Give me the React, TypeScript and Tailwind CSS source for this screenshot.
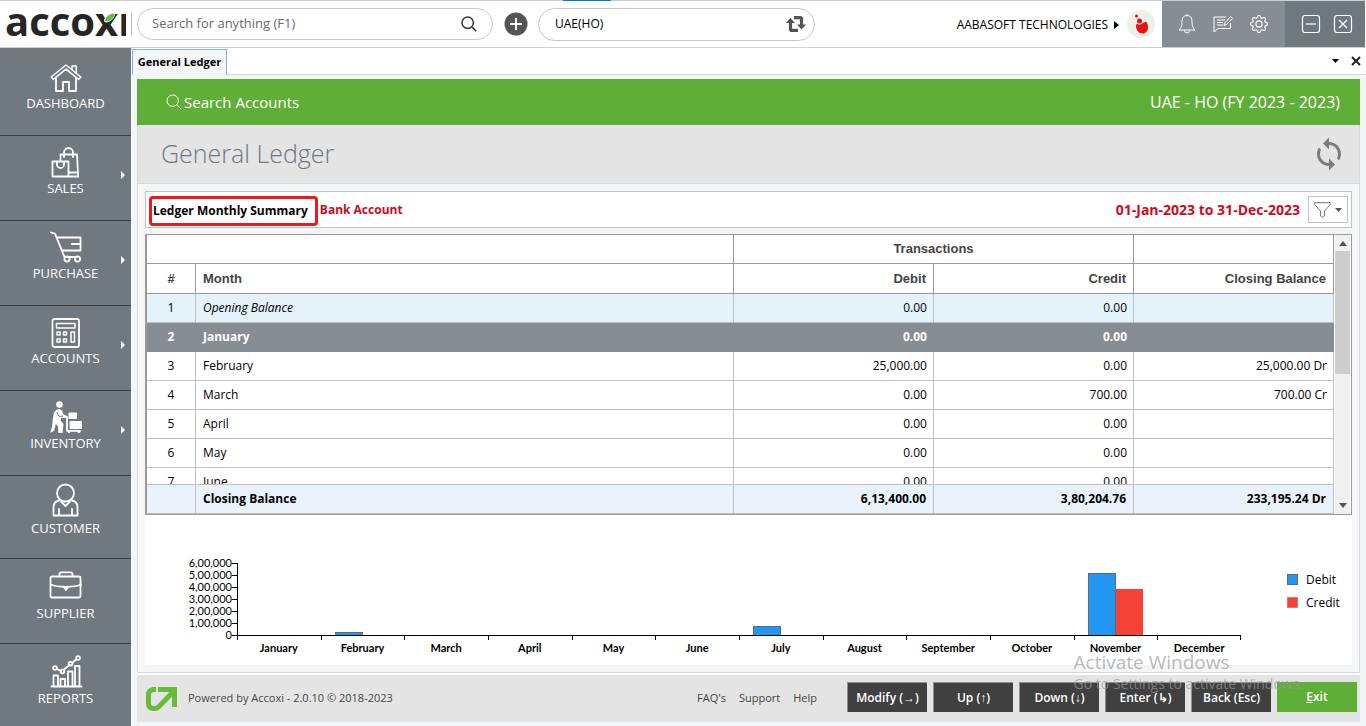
import type { ReactNode } from "react";
import { BsGear } from "react-icons/bs";
import { MdSync } from "react-icons/md";

type Row = { month: string; debit: string; credit: string; balance?: string };

const ROWS: Row[] = [
  { month: "Opening Balance", debit: "0.00", credit: "0.00" },
  { month: "January", debit: "0.00", credit: "0.00" },
  { month: "February", debit: "25,000.00", credit: "0.00", balance: "25,000.00 Dr" },
  { month: "March", debit: "0.00", credit: "700.00", balance: "700.00 Cr" },
  { month: "April", debit: "0.00", credit: "0.00" },
  { month: "May", debit: "0.00", credit: "0.00" },
  { month: "June", debit: "0.00", credit: "0.00" },
];

const CHART = [
  { month: "January", debit: 0, credit: 0 },
  { month: "February", debit: 25000, credit: 0 },
  { month: "March", debit: 0, credit: 700 },
  { month: "April", debit: 0, credit: 0 },
  { month: "May", debit: 0, credit: 0 },
  { month: "June", debit: 0, credit: 0 },
  { month: "July", debit: 75000, credit: 0 },
  { month: "August", debit: 0, credit: 0 },
  { month: "September", debit: 0, credit: 0 },
  { month: "October", debit: 0, credit: 0 },
  { month: "November", debit: 513400, credit: 379504 },
  { month: "December", debit: 0, credit: 0 },
];

const AXIS = ["6,00,000", "5,00,000", "4,00,000", "3,00,000", "2,00,000", "1,00,000", "0"];

// whole pixels, so that tiny amounts leave no smear on the axis
function barHeight(value: number) {
  return Math.round((value / 600000) * 72);
}

function NavIcon({ top = 0, children }: { top?: number; children: ReactNode }) {
  return (
    <svg
      viewBox={`0 ${top} 32 32`}
      className="h-8 w-8 overflow-visible"
      fill="none"
      stroke="#fff"
      strokeWidth="1.8"
      strokeLinejoin="round"
      strokeLinecap="round"
      aria-hidden="true"
    >
      {children}
    </svg>
  );
}

const HouseIcon = () => (
  <NavIcon top={-2}>
    <path d="M16 2 1.2 14l2.2 2.4L16 6.2l12.6 10.2 2.2-2.4z" strokeWidth="1.5" />
    <path d="M22 6.5V3h4.2v7" strokeWidth="1.5" />
    <path d="M6 15.500V28h7v-9h6v9h7V15.500" />
  </NavIcon>
);

const BagsIcon = () => (
  <NavIcon>
    <path d="M10.500 14V8.500h16.500l1.200 22H19" />
    <path d="M14 11V6.500a4.500 4.500 0 0 1 9 0V11" />
    <path d="M2.500 15.500h16v15h-16z" />
    <path d="M7 16v2.500a3.500 3.500 0 0 0 7 0V16" />
    <path d="M19 26.500h8.500" />
  </NavIcon>
);

const CartIcon = () => (
  <NavIcon>
    <path d="M.8 1.500 5 2.600 14.500 26H27M7.200 6.500h23.300v13H12.500" />
    <path d="M22 13h8" strokeWidth="2.200" />
    <circle cx="17" cy="28" r="2.600" />
    <circle cx="27.500" cy="28" r="2.600" />
  </NavIcon>
);

const CalculatorIcon = () => (
  <NavIcon top={-1}>
    <rect x="2.500" y="2" width="26.500" height="28" rx="2" />
    <rect x="6.500" y="6.500" width="18.500" height="4.500" strokeWidth="1.500" />
    <path
      strokeWidth="1.500"
      d="M7 15h3v3H7zM13.500 15h3v3h-3zM7 22h3v3H7zM13.500 22h3v3h-3zM21 15h3.500v10h-3.500z"
    />
  </NavIcon>
);

const PorterIcon = () => (
  <NavIcon>
    <circle cx="9.500" cy="3.600" r="3.300" fill="#fff" stroke="none" />
    <path
      fill="#fff"
      stroke="none"
      d="M5.500 9.500c2-1.800 6-1.800 6.800.5l1 3.200 3.700 1.800v2l-5.500-.5-1 3 3 3.500-1 9H8.300l-.3-6.500-2.200-2.500-1.800 6.700L.6 32v-2L2 26l.7-7.300 1-6.200z"
    />
    <path d="M13 15.800h4v14h13" />
    <path d="M7 11.500l1.800 3.700h4" stroke="#707880" strokeWidth="1" />
    <rect x="18.500" y="11.500" width="8.500" height="6.500" rx="1" fill="#fff" stroke="none" />
    <rect x="19.500" y="20" width="12.500" height="8" rx="1" fill="#fff" stroke="none" />
    <circle cx="19" cy="30.500" r="1.500" fill="#fff" stroke="none" />
    <circle cx="29" cy="30.500" r="1.500" fill="#fff" stroke="none" />
  </NavIcon>
);

const PersonIcon = () => (
  <NavIcon top={2}>
    <circle cx="15.500" cy="9" r="8.500" />
    <path d="M9 16.500c-4 .8-5.500 3.200-5.500 6.500v8.500h24V23c0-3.300-1.500-5.700-5.500-6.500" />
    <path d="m11 17.500 4.500 4.500 4.500-4.500M9 31v-6M22 31v-6" />
  </NavIcon>
);

const BriefcaseIcon = () => (
  <NavIcon top={2}>
    <rect x="0.500" y="7.500" width="30" height="21" rx="1.500" />
    <path d="M9.500 7V4.500L11 3.300h10l1.500 1.200V7M1 15.500c4 2 9 2.300 15 2.300s11-.3 15-2.300" />
    <path d="M14 18h4l-2 3z" fill="#fff" />
  </NavIcon>
);

const ReportIcon = () => (
  <NavIcon top={1}>
    <path d="M1.500 31.500h30M3.500 31V20.500H8V31M10.500 31v-7h4.500v7M18 31V16.500h4.500V31M25 31V11h4.500v20" />
    <path d="m7 14 4 2M14 14.500 20 9.500M22.500 7.500 26 4.500" />
    <circle cx="5" cy="13" r="1.900" />
    <circle cx="12.500" cy="16.500" r="1.900" />
    <circle cx="20.500" cy="8.800" r="1.900" />
    <circle cx="28" cy="3" r="1.900" />
  </NavIcon>
);

const NAV = [
  { label: "DASHBOARD", icon: <HouseIcon />, more: false, size: "h-[88px] pb-[22px]" },
  { label: "SALES", icon: <BagsIcon />, more: true, size: "h-[85px] pb-[22px]" },
  { label: "PURCHASE", icon: <CartIcon />, more: true, size: "h-[85px] pb-[22px]" },
  { label: "ACCOUNTS", icon: <CalculatorIcon />, more: true, size: "h-[85px] pb-[22px]" },
  { label: "INVENTORY", icon: <PorterIcon />, more: true, size: "h-[85px] pb-[22px]" },
  { label: "CUSTOMER", icon: <PersonIcon />, more: false, size: "h-[83px] pb-5" },
  { label: "SUPPLIER", icon: <BriefcaseIcon />, more: false, size: "h-[85px] pb-5" },
  { label: "REPORTS", icon: <ReportIcon />, more: false, size: "h-[82px] pb-[18px]" },
];

function SearchIcon({ className }: { className: string }) {
  return (
    <svg viewBox="0 0 16 16" className={className} fill="none" stroke="currentColor" aria-hidden="true">
      <circle cx="6.700" cy="6.700" r="5.700" />
      <path d="m11 11 4.300 4.300" />
    </svg>
  );
}

function Logo() {
  return (
    <div className="relative ml-[5px] h-[23px] w-[121px] overflow-hidden text-[40px] leading-[23px] font-bold text-[#262626]">
      <span className="relative -top-1 block">accoxi</span>
      <svg viewBox="0 0 12 10" className="absolute top-0 right-2.5 h-[10px] w-3" aria-hidden="true">
        <path d="M0 8.500C.5 3 4 .3 11.500.2 10 5.500 7 9 2 9.500z" fill="#fff" />
        <path d="M1 7.500C2 3 5 .8 11 .5 9.500 5 7 8 3 8.500z" fill="#6abf40" />
      </svg>
    </div>
  );
}

function TopBar() {
  return (
    <header className="relative flex h-12 items-center border-y border-[#d0d0d0] bg-white">
      <div className="absolute -top-px left-[563px] h-px w-12 bg-[#0078d7]" />
      <Logo />
      <div className="ml-[5px] h-6 w-px bg-[#bdbdbd]" />
      <label className="ml-[5px] flex h-8 w-[356px] items-center rounded-full border border-[#c8c8c8] pr-[15px] pl-3.5">
        <input
          type="text"
          aria-label="Search"
          placeholder="Search for anything (F1)"
          className="min-w-0 flex-1 text-[13px] outline-none placeholder:text-[#6a6a6a]"
        />
        <SearchIcon className="h-4 w-4 stroke-[1.500] text-[#333]" />
      </label>
      <button aria-label="Add" className="ml-[11px]">
        <svg viewBox="0 0 24 24" className="h-6 w-6" aria-hidden="true">
          <circle cx="12" cy="12" r="11.500" fill="#555" />
          <path d="M12 6v12M6 12h12" stroke="#fff" strokeWidth="2" />
        </svg>
      </button>
      <button className="ml-2.5 flex h-[33px] w-[277px] items-center justify-between rounded-full border border-[#c8c8c8] pr-2 pl-4 text-xs">
        UAE(HO)
        <svg viewBox="0 0 20 18" className="h-[18px] w-5" fill="none" stroke="#555" strokeWidth="3.200" aria-hidden="true">
          <path d="M4.500 6v8.200q0 1.200 1.200 1.200H12M8 2.600h6.300q1.200 0 1.200 1.200V12" />
          <path d="M4.500 3 0 8h9zM15.500 14.500 11 9.500h9z" fill="#555" stroke="none" />
        </svg>
      </button>
      <button className="ml-auto flex items-center gap-1.5 pt-0.5 text-xs">
        AABASOFT TECHNOLOGIES
        <svg viewBox="0 0 5 8" className="h-2 w-[5px]" aria-hidden="true">
          <path d="M0 0v8l5-4z" />
        </svg>
      </button>
      <svg viewBox="0 0 28 28" className="mr-[7px] ml-2 h-7 w-7" aria-hidden="true">
        <circle cx="14" cy="14" r="14" fill="#efefee" />
        <path d="M9 16c0-1.500.5-2 1.500-2.300a3 3 0 0 0 4 .3c2-1.500 3.500-2 4.500-2.500 1.500 1.500 2.300 4 2 6.500-.4 3.400-2.500 5.500-5.500 5.500C12 23.500 9 20 9 16z" fill="#ee1111" />
        <circle cx="12.500" cy="11" r="2.500" fill="#ee1111" />
        <circle cx="9.500" cy="6" r="1.500" fill="#ee1111" />
      </svg>
      <div className="flex h-full w-[123px] items-center justify-between bg-[#868e94] pr-[17px] pl-4 text-white">
        <button aria-label="Notifications">
          <svg viewBox="0 0 18 20" className="h-5 w-[18px]" fill="none" stroke="#fff" aria-hidden="true">
            <path d="M9 1.500c-3.500 0-5 2.500-5 5.500 0 5-1 7-3 9h16c-2-2-3-4-3-9 0-3-1.500-5.500-5-5.500zM9 0v1.500M6.500 16.500a2.500 2.500 0 0 0 5 0" />
          </svg>
        </button>
        <button aria-label="Messages">
          <svg viewBox="0 0 20 18" className="h-[18px] w-5" fill="none" stroke="#fff" aria-hidden="true">
            <path d="M13 2H1v15l4-3.500h12.500V8M4 5h8M4 7.500h6M4 10h6M11 10.500l.8-2.500L17.500 1.500l2 1.700-6 6.300z" />
          </svg>
        </button>
        <button aria-label="Settings">
          <BsGear className="h-[18px] w-[18px]" />
        </button>
      </div>
      <div className="mr-px flex h-full w-20 items-center justify-between bg-[#70787f] pr-3 pl-4">
        <button aria-label="Minimize">
          <svg viewBox="0 0 20 20" className="h-5 w-5" fill="none" stroke="#fff" strokeWidth="1.200" aria-hidden="true">
            <rect x="1.500" y="1.500" width="17" height="17" rx="2.500" />
            <path d="M5 10h10" />
          </svg>
        </button>
        <button aria-label="Close">
          <svg viewBox="0 0 20 20" className="h-5 w-5" fill="none" stroke="#fff" strokeWidth="1.200" aria-hidden="true">
            <rect x="1.500" y="1.500" width="17" height="17" rx="2.500" />
            <path d="m6 6 8 8M14 6l-8 8" />
          </svg>
        </button>
      </div>
    </header>
  );
}

function Sidebar() {
  return (
    <nav className="w-[131px] shrink-0 bg-[#707880]">
      {NAV.map((n) => (
        <a
          key={n.label}
          href="#"
          className={`relative flex flex-col items-center justify-end border-b border-[#3c3f42] text-[13px] leading-5 text-white last:border-b-0 ${n.size}`}
        >
          {n.icon}
          {n.label}
          {n.more && (
            <svg viewBox="0 0 4 8" className="absolute top-[35px] right-1.5 h-2 w-1" fill="#fff" aria-hidden="true">
              <path d="M0 0v8l4-4z" />
            </svg>
          )}
        </a>
      ))}
    </nav>
  );
}

function Columns() {
  return (
    <colgroup>
      <col className="w-[49px]" />
      <col />
      <col className="w-[200px]" />
      <col className="w-[200px]" />
      <col className="w-[200px]" />
    </colgroup>
  );
}

const TH = "border-r border-b border-[#9a9a9a] px-[7px]";
const TF = "border-y border-r border-[#c0c0c0] px-[7px]";

function rowStyle(i: number) {
  if (i === 0) return "border-[#c0c0c0] bg-[#e4f2fa]";
  if (i === 1) return "border-[#868e94] bg-[#868e94] font-bold text-white";
  return "border-[#c0c0c0] bg-white";
}

function LedgerTable() {
  return (
    <div className="mt-1.5 flex border border-l-2 border-[#9a9a9a] bg-white">
      <div className="min-w-0 flex-1">
        <div className="h-[249px] overflow-hidden">
          <table className="w-full table-fixed border-separate border-spacing-0 text-xs">
            <Columns />
            <thead className="font-['Liberation_Sans',Arial,sans-serif] text-[13px] text-[#444]">
              <tr className="h-[29px]">
                <th colSpan={2} className={TH} />
                <th colSpan={2} className={TH}>Transactions</th>
                <th className={TH} />
              </tr>
              <tr className="h-[30px]">
                <th className={TH}>#</th>
                <th className={`${TH} text-left`}>Month</th>
                <th className={`${TH} text-right`}>Debit</th>
                <th className={`${TH} text-right`}>Credit</th>
                <th className={`${TH} text-right`}>Closing Balance</th>
              </tr>
            </thead>
            <tbody>
              {ROWS.map((r, i) => {
                const td = `border-r border-b ${rowStyle(i)}`;
                return (
                  <tr key={r.month} className="h-[29px]">
                    <td className={`${td} text-center`}>{i + 1}</td>
                    <td className={`${td} px-[7px] ${i === 0 ? "italic" : ""}`}>{r.month}</td>
                    <td className={`${td} px-1.5 text-right`}>{r.debit}</td>
                    <td className={`${td} px-1.5 text-right`}>{r.credit}</td>
                    <td className={`${td} px-1.5 text-right`}>{r.balance}</td>
                  </tr>
                );
              })}
            </tbody>
          </table>
        </div>
        <table className="w-full table-fixed border-separate border-spacing-0 text-xs font-bold">
          <Columns />
          <tbody>
            <tr className="h-[30px] bg-[#eaf2fc]">
              <td className={TF} />
              <td className={TF}>Closing Balance</td>
              <td className={`${TF} text-right`}>6,13,400.00</td>
              <td className={`${TF} text-right`}>3,80,204.76</td>
              <td className={`${TF} text-right`}>233,195.24 Dr</td>
            </tr>
          </tbody>
        </table>
      </div>
      <div className="flex w-[17px] flex-col items-center border-x border-white bg-[#f0f0f0]">
        <svg viewBox="0 0 8 5" className="mt-1.5 mb-[5px] h-[5px] w-2" fill="#505050" aria-hidden="true">
          <path d="M0 5 4 0l4 5z" />
        </svg>
        <div className="h-[123px] w-full bg-[#cdcdcd]" />
        <svg viewBox="0 0 8 5" className="mt-auto mb-1.5 h-[5px] w-2" fill="#505050" aria-hidden="true">
          <path d="M0 0l4 5 4-5z" />
        </svg>
      </div>
    </div>
  );
}

function MonthlyChart() {
  return (
    <div className="flex min-h-[150px] flex-1 bg-white pt-[42px] font-['Lato',sans-serif] text-[11px]">
      <div className="flex w-[87px] flex-col text-right">
        {AXIS.map((a) => (
          <span key={a} className="h-3 leading-3">{a}</span>
        ))}
      </div>
      <div className="mt-[6px] flex h-[73px] w-[5px] flex-col justify-between">
        {AXIS.map((a) => (
          <span key={a} className="h-px bg-black" />
        ))}
      </div>
      <div className="mt-[6px] grid flex-1 grid-cols-12">
        {CHART.map((c) => (
          <div key={c.month} className="first:*:first:border-l">
            <div className="flex h-[73px] items-end justify-center border-b border-black">
              <div
                className={`w-7 bg-[#2196f3] ${c.debit ? "border border-b-0 border-[#5f6a73]" : ""}`}
                style={{ height: barHeight(c.debit) }}
              />
              <div className="w-[27px] bg-[#f44336]" style={{ height: barHeight(c.credit) }} />
            </div>
            <div className="flex justify-between">
              <span className="h-1 w-px bg-black" />
              <span className="pt-1 leading-4 font-bold">{c.month}</span>
              <span className={c.month === "December" ? "h-1 w-px bg-black" : "w-px"} />
            </div>
          </div>
        ))}
      </div>
      <ul className="w-[111px] pt-[11px] pl-[46px] font-['Open_Sans','Noto_Sans',sans-serif] text-xs">
        <li className="flex h-[23px] items-center gap-2">
          <span className="h-[11px] w-[11px] border border-[#5f6a73] bg-[#2196f3]" />
          Debit
        </li>
        <li className="flex h-[23px] items-center gap-2">
          <span className="h-[11px] w-[11px] border border-[#f0706a] bg-[#f44336]" />
          Credit
        </li>
      </ul>
    </div>
  );
}

const ACTION =
  "h-[30px] w-20 border-t border-l border-[#8f8f8f] bg-[#404040] text-xs font-semibold text-white";

function Footer() {
  return (
    <footer className="mr-[6px] mb-1 ml-[5px] box-content flex h-[47px] items-center border-t-2 border-white bg-[#e4e4e4] text-[11px] text-[#444]">
      <svg viewBox="0 0 31 24" className="ml-[9px] h-6 w-[31px]" aria-hidden="true">
        <path d="M10 2.500H7.500Q2.500 3 2.500 8v8.500q0 5 5 5h1.500q2 0 3.500-1.500L26 6" fill="none" stroke="#67bb3c" strokeWidth="5" />
        <path d="M12 0h19v20h-5V7l-4-2H12z" fill="#67bb3c" />
      </svg>
      <span className="ml-[11px]">Powered by Accoxi - 2.0.10 © 2018-2023</span>
      <div className="mr-[30px] ml-auto flex gap-[13px]">
        <a href="#">FAQ's</a>
        <a href="#">Support</a>
        <a href="#">Help</a>
      </div>
      <div className="mt-[7px] mr-[3px] flex gap-1.5 self-start">
        <button className={ACTION}>Modify (→)</button>
        <button className={ACTION}>Up (↑)</button>
        <button className={ACTION}>Down (↓)</button>
        <button className={ACTION}>Enter (↳)</button>
        <button className={ACTION}>Back (Esc)</button>
        <button className="h-[30px] w-20 bg-[#5fae38] text-xs font-semibold text-white">
          <u>E</u>xit
        </button>
      </div>
    </footer>
  );
}

function Workspace() {
  return (
    <main className="flex min-w-0 flex-1 flex-col border-l border-white bg-[#f4f5f7]">
      <div className="flex h-[27px] items-end border-b border-[#d5d8dc] bg-white">
        <button className="-mb-px h-[26px] w-[95px] border border-b-0 border-[#7eb4ea] bg-[#f4f5f7] text-[11px] font-bold">
          General Ledger
        </button>
        <div className="mr-[5px] ml-auto flex items-center gap-3 self-center">
          <button aria-label="Tab list">
            <svg viewBox="0 0 7 4" className="h-1 w-[7px]" aria-hidden="true">
              <path d="M0 0h7L3.500 4z" />
            </svg>
          </button>
          <button aria-label="Close tab">
            <svg viewBox="0 0 10 10" className="h-[10px] w-[10px]" stroke="#222" strokeWidth="2" aria-hidden="true">
              <path d="m1 1 8 8M9 1 1 9" />
            </svg>
          </button>
        </div>
      </div>

      <div className="mt-1 mr-[6px] ml-[5px] flex flex-1 flex-col border border-t-0 border-[#d5d8dc]">
        <div className="-mx-px flex h-[46px] items-center justify-between bg-[#5fae38] pr-5 pl-[29px] text-white">
          <button className="flex items-center gap-0.5 text-[15px]">
            <SearchIcon className="h-4 w-4" />
            Search Accounts
          </button>
          <span>UAE - HO (FY 2023 - 2023)</span>
        </div>
        <div className="flex h-[59px] items-center justify-between border-b border-[#d5d8dc] bg-[#e4e4e4] pr-3 pl-[23px]">
          <h1 className="text-[25px] font-light text-[#707880]">General Ledger</h1>
          <button aria-label="Refresh">
            <MdSync className="h-9 w-9 text-[#7d7d7d]" />
          </button>
        </div>

        <div className="m-[7px] flex flex-1 flex-col">
          <div className="flex h-[37px] items-center border border-[#c0c3c6] bg-white px-[3px] text-xs font-bold">
            <h2 className="mt-0.5 rounded-sm border-[3px] border-[#e81c1f] py-0.5 pr-[7px] pl-px leading-5">
              Ledger Monthly Summary
            </h2>
            <span className="ml-0.5 text-[#d0091c]">Bank Account</span>
            <span className="ml-auto text-sm text-[#d0091c]">01-Jan-2023 to 31-Dec-2023</span>
            <button aria-label="Filter" className="ml-2 flex h-[27px] w-10 items-center justify-center gap-1 border border-[#c0c3c6]">
              <svg viewBox="0 0 17 16" className="h-4 w-[17px]" fill="none" stroke="#777" aria-hidden="true">
                <path d="M.7.700h15.600v2L10.500 9v5L8 15.500 6.500 14V9L.7 2.700z" />
              </svg>
              <svg viewBox="0 0 7 4" className="h-1 w-[7px]" fill="#555" aria-hidden="true">
                <path d="M0 0h7L3.500 4z" />
              </svg>
            </button>
          </div>
          <LedgerTable />
          <MonthlyChart />
        </div>
      </div>
      <Footer />
    </main>
  );
}

export default function App() {
  return (
    <div className="relative flex min-h-screen flex-col bg-white font-['Open_Sans','Noto_Sans',sans-serif] text-black">
      <TopBar />
      <div className="flex flex-1">
        <Sidebar />
        <Workspace />
      </div>
      <div className="pointer-events-none absolute right-[63px] bottom-8 text-[#9a9a9a]/70">
        <p className="text-[19px] leading-6">Activate Windows</p>
        <p className="text-sm leading-5">Go to Settings to activate Windows.</p>
      </div>
    </div>
  );
}
